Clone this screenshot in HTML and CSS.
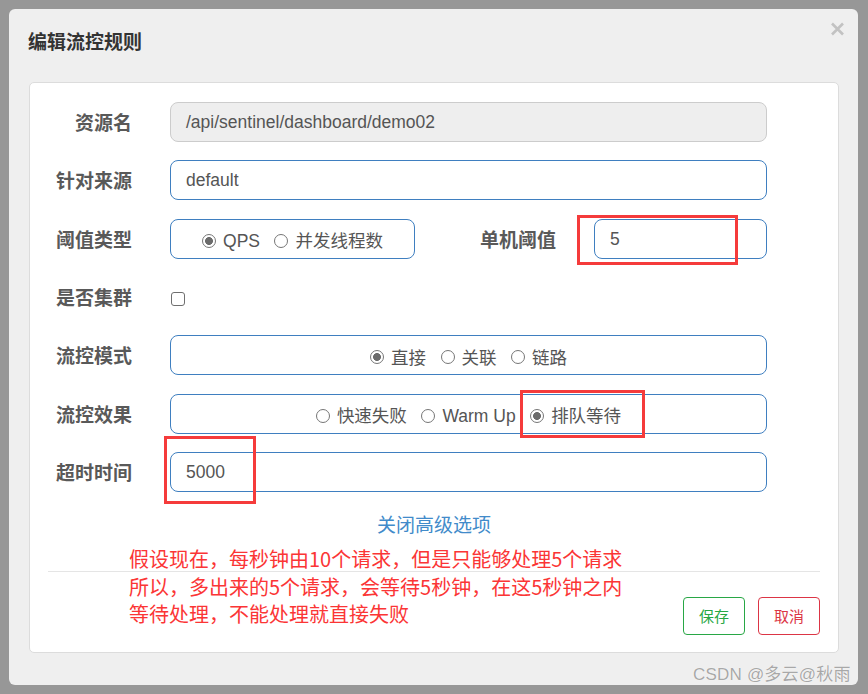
FILE: index.html
```html
<!DOCTYPE html>
<html lang="zh-CN">
<head>
<meta charset="utf-8">
<title>编辑流控规则</title>
<link rel="stylesheet" href="styles.css">
</head>
<body>
<div class="backdrop">
  <div class="modal">
    <div class="modal-header">
      <h4 class="modal-title">编辑流控规则</h4>
      <button class="close" type="button" aria-label="关闭"><svg width="15" height="14" viewBox="0 0 15 14"><path d="M2 1.5 L13 12.5 M13 1.5 L2 12.5" stroke="#c2c2c2" stroke-width="2.6" fill="none"/></svg></button>
    </div>
    <div class="panel">
      <form class="form">
        <div class="row">
          <label class="label">资源名</label>
          <div class="control input readonly">/api/sentinel/dashboard/demo02</div>
        </div>
        <div class="row">
          <label class="label">针对来源</label>
          <div class="control input">default</div>
        </div>
        <div class="row">
          <label class="label">阈值类型</label>
          <div class="control split">
            <div class="radio-box">
              <span class="radio"><i class="dot checked"></i>QPS</span>
              <span class="radio"><i class="dot"></i>并发线程数</span>
            </div>
            <label class="label inner">单机阈值</label>
            <div class="input">5</div>
          </div>
        </div>
        <div class="row">
          <label class="label">是否集群</label>
          <div class="control check-cell"><span class="checkbox"></span></div>
        </div>
        <div class="row">
          <label class="label">流控模式</label>
          <div class="control radio-box">
            <span class="radio"><i class="dot checked"></i>直接</span>
            <span class="radio"><i class="dot"></i>关联</span>
            <span class="radio"><i class="dot"></i>链路</span>
          </div>
        </div>
        <div class="row">
          <label class="label">流控效果</label>
          <div class="control radio-box">
            <span class="radio"><i class="dot"></i>快速失败</span>
            <span class="radio"><i class="dot"></i>Warm Up</span>
            <span class="radio"><i class="dot checked"></i>排队等待</span>
          </div>
        </div>
        <div class="row">
          <label class="label">超时时间</label>
          <div class="control input">5000</div>
        </div>
      </form>
      <a class="toggle" href="#">关闭高级选项</a>
      <div class="footer">
        <button class="btn btn-save" type="button">保存</button>
        <button class="btn btn-cancel" type="button">取消</button>
      </div>
    </div>
  </div>
</div>

<span class="mark mark-threshold"></span>
<span class="mark mark-queue"></span>
<span class="mark mark-timeout"></span>
<p class="note">假设现在，每秒钟由10个请求，但是只能够处理5个请求<br>所以，多出来的5个请求，会等待5秒钟，在这5秒钟之内<br>等待处理，不能处理就直接失败</p>
<span class="watermark">CSDN @多云@秋雨</span>
</body>
</html>
```
FILE: styles.css
```css
* { box-sizing: border-box; }
html, body { margin: 0; padding: 0; }
body {
  width: 868px;
  height: 694px;
  overflow: hidden;
  position: relative;
  background: #979797;
  font-family: "Liberation Sans", "Noto Sans CJK SC", sans-serif;
}
.backdrop { padding: 9px 10px 0 9px; }
.modal {
  width: 849px;
  height: 676px;
  background: #efefef;
  border-radius: 6px;
}
.modal-header {
  height: 73px;
  padding: 21px 13px 0 19px;
  display: flex;
  justify-content: space-between;
  align-items: flex-start;
}
.modal-title {
  margin: 0;
  font: 700 19px/22px "Noto Sans CJK SC", sans-serif;
  color: #333;
}
.close {
  border: 0;
  background: none;
  padding: 0;
  margin-top: -8px;
  width: 15px;
  height: 14px;
}
.close svg { display: block; }
.panel {
  margin: 0 19px 0 20px;
  background: #fff;
  border: 1px solid #dcdcdc;
  border-radius: 5px;
  padding: 19px 18px 17px;
}
.form {
  margin: 0;
  display: flex;
  flex-direction: column;
  gap: 18.33px;
}
.row {
  display: flex;
  align-items: center;
  height: 40px;
}
.label {
  flex: none;
  width: 84px;
  margin-right: 38px;
  text-align: right;
  white-space: nowrap;
  font: 700 19px/24px "Noto Sans CJK SC", sans-serif;
  color: #595959;
}
.control { width: 597px; height: 40px; }
.input {
  height: 40px;
  border: 1px solid #3f7fc0;
  border-radius: 8px;
  padding: 0 15px;
  display: flex;
  align-items: center;
  font-size: 17.5px;
  line-height: 20px;
  color: #555;
}
.readonly { background: #eee; border-color: #ccc; }
.split {
  display: grid;
  grid-template-columns: 245px 1fr 173px;
  align-items: center;
}
.split .label { width: auto; margin-right: 0; padding-right: 38px; }
.radio-box {
  height: 40px;
  border: 1px solid #3f7fc0;
  border-radius: 8px;
  padding-top: 5px;
  display: flex;
  justify-content: center;
  align-items: center;
  gap: 14.5px;
  font-size: 17.5px;
  line-height: 22px;
  color: #555;
}
.radio { display: inline-flex; align-items: center; gap: 7px; }
.dot {
  width: 14px;
  height: 14px;
  margin-top: -1px;
  border: 1px solid #767676;
  border-radius: 50%;
  background: #fff;
}
.dot.checked { background: radial-gradient(circle, #6b6b6b 0 3.6px, #fff 4.3px); }
.check-cell { display: flex; align-items: center; }
.checkbox {
  width: 14px;
  height: 14px;
  margin-left: 1px;
  margin-top: 4px;
  border: 1px solid #6f6f6f;
  border-radius: 3px;
}
.toggle {
  display: block;
  margin-top: 20px;
  text-align: center;
  font: 19px/24px "Noto Sans CJK SC", sans-serif;
  color: #428bca;
  text-decoration: none;
}
.footer {
  margin-top: 35px;
  border-top: 1px solid #e5e5e5;
  padding-top: 25px;
  display: flex;
  justify-content: flex-end;
  gap: 13px;
}
.btn {
  width: 62px;
  height: 38px;
  border-radius: 4px;
  background: #fff;
  font: 15px "Noto Sans CJK SC", sans-serif;
  padding: 0;
}
.btn-save { border: 1px solid #28a745; color: #28a745; }
.btn-cancel { border: 1px solid #dc3545; color: #dc3545; }

.mark { position: absolute; border: 3px solid #f53b3b; }
.mark-threshold { left: 577px; top: 215px; width: 161px; height: 50px; }
.mark-queue { left: 520px; top: 390px; width: 125px; height: 48px; }
.mark-timeout { left: 164px; top: 436px; width: 92px; height: 68px; }
.note {
  position: absolute;
  left: 129px;
  top: 545px;
  margin: 0;
  font: 20px/27.7px "Noto Sans CJK SC", sans-serif;
  color: #fb3535;
  white-space: nowrap;
}
.watermark {
  position: absolute;
  left: 693px;
  top: 664px;
  font-size: 17px;
  line-height: 22px;
  color: rgba(110, 110, 110, 0.6);
  text-shadow: 0 0 1px #fff;
  white-space: nowrap;
  letter-spacing: 0.2px;
}
```
